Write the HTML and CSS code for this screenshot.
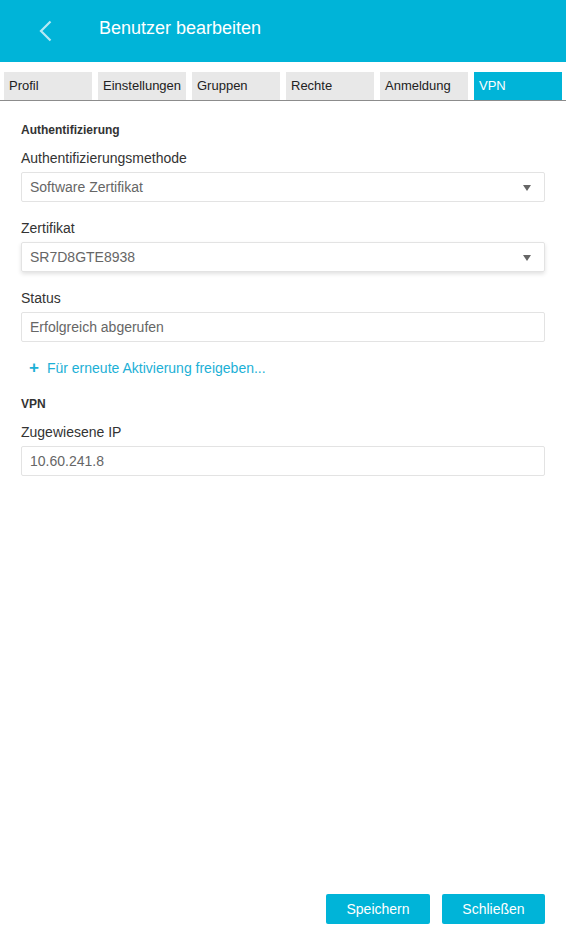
FILE: index.html
```html
<!DOCTYPE html>
<html lang="de">
<head>
    <meta charset="UTF-8">
    <meta name="viewport" content="width=device-width, initial-scale=1.0">
    <title>Benutzer bearbeiten</title>
    <link rel="stylesheet" href="styles.css">
</head>
<body>
    <div class="page">
        <div class="header">
            <a href="#" class="back">
                <svg width="13" height="22" viewBox="0 0 13 22">
                    <polyline points="11.5,1.5 2,11 11.5,20.5" fill="none" stroke="#b5e9f4" stroke-width="2.2"/>
                </svg>
            </a>
            <h1>Benutzer bearbeiten</h1>
        </div>

        <!-- Tabs -->
        <div class="tabs">
            <div class="tab">Profil</div>
            <div class="tab">Einstellungen</div>
            <div class="tab">Gruppen</div>
            <div class="tab">Rechte</div>
            <div class="tab">Anmeldung</div>
            <div class="tab active">VPN</div>
        </div>

        <div class="content">
            <div class="section-title">Authentifizierung</div>

            <div class="field">
                <label>Authentifizierungsmethode</label>
                <div class="select">Software Zertifikat</div>
            </div>

            <div class="field">
                <label>Zertifikat</label>
                <div class="select focused">SR7D8GTE8938</div>
            </div>

            <div class="field">
                <label>Status</label>
                <div class="input">Erfolgreich abgerufen</div>
            </div>

            <a href="#" class="add-link"><span class="plus">+</span>Für erneute Aktivierung freigeben...</a>

            <div class="section-title">VPN</div>

            <div class="field">
                <label>Zugewiesene IP</label>
                <div class="input">10.60.241.8</div>
            </div>
        </div>

        <div class="footer">
            <button class="btn">Speichern</button>
            <button class="btn close">Schließen</button>
        </div>
    </div>
</body>
</html>
```

FILE: styles.css
```css
body {
    font-family: "Liberation Sans", Arial, sans-serif;
    margin: 0;
    padding: 0;
    background-color: #fff;
    color: #333;
}

.page {
    display: flex;
    flex-direction: column;
    min-height: 100vh;
}

.header {
    background-color: #00b4d8;
    height: 62px;
    display: flex;
    align-items: center;
}

.header .back {
    display: flex;
    margin-left: 39px;
    margin-right: 47px;
}

.header h1 {
    margin: 0;
    color: #fff;
    font-size: 18px;
    font-weight: normal;
    position: relative;
    top: -3px;
}

.tabs {
    display: flex;
    gap: 6px;
    padding: 10px 4px 0;
    border-bottom: 1px solid #8c8c8c;
}

.tab {
    width: 88px;
    height: 28px;
    line-height: 28px;
    box-sizing: border-box;
    padding-left: 5px;
    background-color: #e8e8e8;
    color: #222;
    font-size: 13px;
    white-space: nowrap;
}

.tab.active {
    background-color: #00b4d8;
    color: #fff;
}

.content {
    padding: 20px 21px 0;
}

.section-title {
    font-size: 12px;
    font-weight: bold;
    line-height: 18px;
    color: #333;
    margin-bottom: 9px;
}

.field {
    margin-bottom: 16px;
}

.field label {
    display: block;
    font-size: 14px;
    line-height: 20px;
    margin-bottom: 4px;
    color: #333;
}

.select,
.input {
    height: 30px;
    box-sizing: border-box;
    border: 1px solid #e3e3e3;
    border-radius: 2px;
    padding: 0 8px;
    line-height: 28px;
    font-size: 14px;
    color: #666;
}

.select {
    position: relative;
}

.select::after {
    content: "";
    position: absolute;
    right: 13px;
    top: 12px;
    border-left: 4px solid transparent;
    border-right: 4px solid transparent;
    border-top: 6px solid #666;
}

.select.focused {
    box-shadow: 0 2px 4px rgba(0, 0, 0, 0.12);
}

.add-link {
    display: block;
    margin: 1px 0 17px 8px;
    line-height: 20px;
    font-size: 14px;
    color: #1cb0d6;
    text-decoration: none;
}

.add-link .plus {
    font-weight: bold;
    font-size: 17px;
    margin-right: 8px;
}

.footer {
    margin-top: auto;
    display: flex;
    justify-content: flex-end;
    gap: 12px;
    padding: 0 21px 9px;
}

.btn {
    width: 104px;
    height: 30px;
    border: none;
    border-radius: 2px;
    background-color: #00b4d8;
    color: #fff;
    font-family: inherit;
    font-size: 14px;
}

.btn.close {
    width: 103px;
}
```
